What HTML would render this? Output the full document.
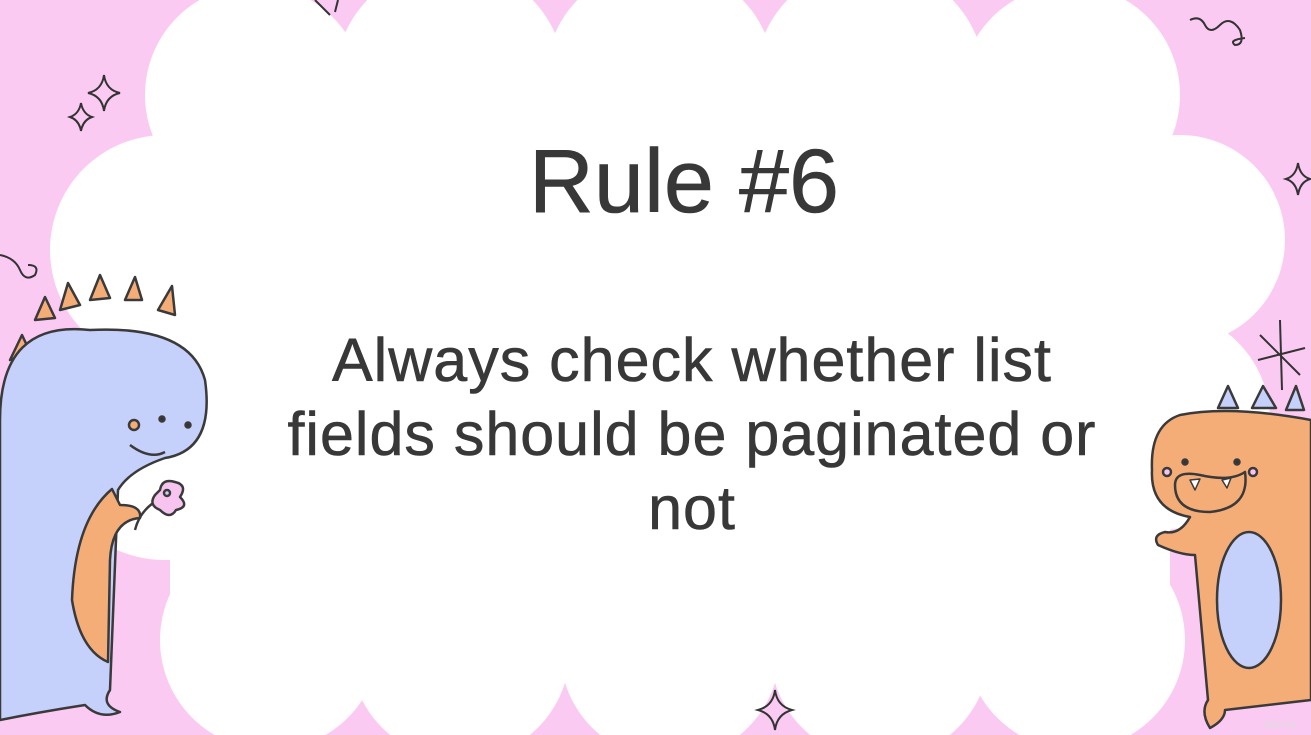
<!DOCTYPE html>
<html><head><style>
html,body{margin:0;padding:0}
body{width:1311px;height:735px;overflow:hidden;background:#fbcaf2;position:relative;font-family:"Liberation Sans",sans-serif}
svg{position:absolute;left:0;top:0}
.t{position:absolute;left:0;width:1380px;text-align:center;color:#383838;-webkit-text-stroke:0.6px #383838}
</style></head><body>
<svg width="1311" height="735" viewBox="0 0 1311 735">
<g fill="#fff">
<circle cx="255" cy="95" r="110"/><circle cx="450" cy="80" r="115"/><circle cx="660" cy="80" r="115"/><circle cx="870" cy="80" r="115"/><circle cx="1070" cy="95" r="110"/>
<circle cx="165" cy="250" r="115"/><circle cx="165" cy="440" r="120"/>
<circle cx="1180" cy="240" r="105"/><circle cx="1160" cy="420" r="110"/>
<circle cx="270" cy="640" r="110"/><circle cx="460" cy="650" r="110"/><circle cx="670" cy="650" r="110"/><circle cx="880" cy="650" r="110"/><circle cx="1075" cy="640" r="110"/>
<rect x="170" y="60" width="1000" height="620"/>
</g>
<g fill="none" stroke="#333" stroke-width="2">
<path d="M104 75 Q106 90 120 93 Q106 96 104 111 Q102 96 88 93 Q102 90 104 75Z"/>
<path d="M81 103 Q83 114 92 117 Q83 120 81 131 Q79 120 70 117 Q79 114 81 103Z"/>
<path d="M1298 163 Q1300 176 1310 179 Q1300 182 1298 195 Q1296 182 1286 179 Q1296 176 1298 163Z"/>
<path d="M775 690 Q777 706 792 710 Q777 714 775 730 Q773 714 758 710 Q773 706 775 690Z"/>
<path d="M1190 20 Q1200 15 1205 25 Q1210 35 1220 25 Q1230 15 1240 30 Q1245 45 1235 45 Q1228 40 1245 38"/>
<path d="M0 255 Q15 258 20 270 Q25 282 35 275 Q40 265 28 265"/>
<path d="M1260 335 L1300 375 M1280 320 L1282 390 M1258 360 L1305 348"/>
<path d="M315 0 L330 15 M338 0 L335 12"/>
</g>
<g stroke="#3a3a3a" stroke-width="2.5" stroke-linejoin="round">
<path fill="#f5ad78" d="M10 360 L22 335 L30 352Z M35 320 L45 297 L55 318Z M60 310 L68 283 L80 305Z M90 300 L100 275 L110 298Z M125 300 L135 277 L142 300Z M158 310 L172 286 L175 315Z"/>
<path fill="#c5d0fb" d="M0 420 Q0 320 90 330 Q190 325 205 380 Q215 450 165 458 Q130 470 118 490 L110 690 Q100 705 120 712 Q100 720 85 705 Q40 712 0 720Z"/>
<path fill="#f5ad78" d="M112 489 Q75 520 72 600 Q80 650 108 662 L110 560 Q112 520 140 518 Q142 505 120 505Z"/>
<path fill="none" d="M130 445 Q150 460 165 452"/>
<circle cx="134" cy="425" r="5" fill="#f5ad78"/>
<circle cx="162" cy="419" r="2.5" fill="#333"/><circle cx="188" cy="425" r="2.5" fill="#333"/>
<path fill="none" d="M135 530 Q140 510 158 500"/>
<path fill="#f7c4ef" d="M160 490 Q162 478 175 482 Q188 485 180 497 Q190 507 176 510 Q170 520 160 510 Q148 505 155 495Z"/>
<circle cx="167" cy="493" r="3" fill="#c5d0fb"/>
</g>
<g stroke="#3a3a3a" stroke-width="2.5" stroke-linejoin="round">
<path fill="#c5d0fb" d="M1218 408 L1228 386 L1238 408Z M1252 408 L1263 386 L1276 408Z M1286 410 L1296 386 L1304 410Z"/>
<path fill="#f5ad78" d="M1311 420 Q1230 405 1180 415 Q1150 425 1152 470 Q1150 510 1190 517 Q1180 535 1165 532 Q1152 535 1158 545 Q1180 555 1195 555 L1208 700 Q1200 712 1210 728 Q1225 720 1225 710 L1311 700Z"/>
<path fill="none" d="M1175 485 Q1175 470 1200 475 Q1230 482 1245 472 Q1250 508 1210 512 Q1175 512 1175 485Z"/>
<path fill="#fff" d="M1190 480 L1195 490 L1200 479Z M1222 480 L1227 488 L1231 478Z" stroke-width="1.5"/>
<ellipse cx="1249" cy="600" rx="32" ry="68" fill="#c5d0fb"/>
<circle cx="1167" cy="472" r="4" fill="#f7c4ef"/><circle cx="1253" cy="472" r="4" fill="#f7c4ef"/>
<circle cx="1185" cy="462" r="2.5" fill="#333"/><circle cx="1237" cy="462" r="2.5" fill="#333"/>
</g>
<text x="1280" y="728" font-size="11" fill="#ddd" font-family="Liberation Sans" text-anchor="middle">ûdemy</text>
</svg>
<div class="t" style="top:131px;font-size:90px;left:-6px;">Rule #6</div>
<div class="t" style="top:323px;font-size:61px;line-height:74px;letter-spacing:1px;left:2px">Always check whether list<br>fields should be paginated or<br>not</div>
</body></html>
